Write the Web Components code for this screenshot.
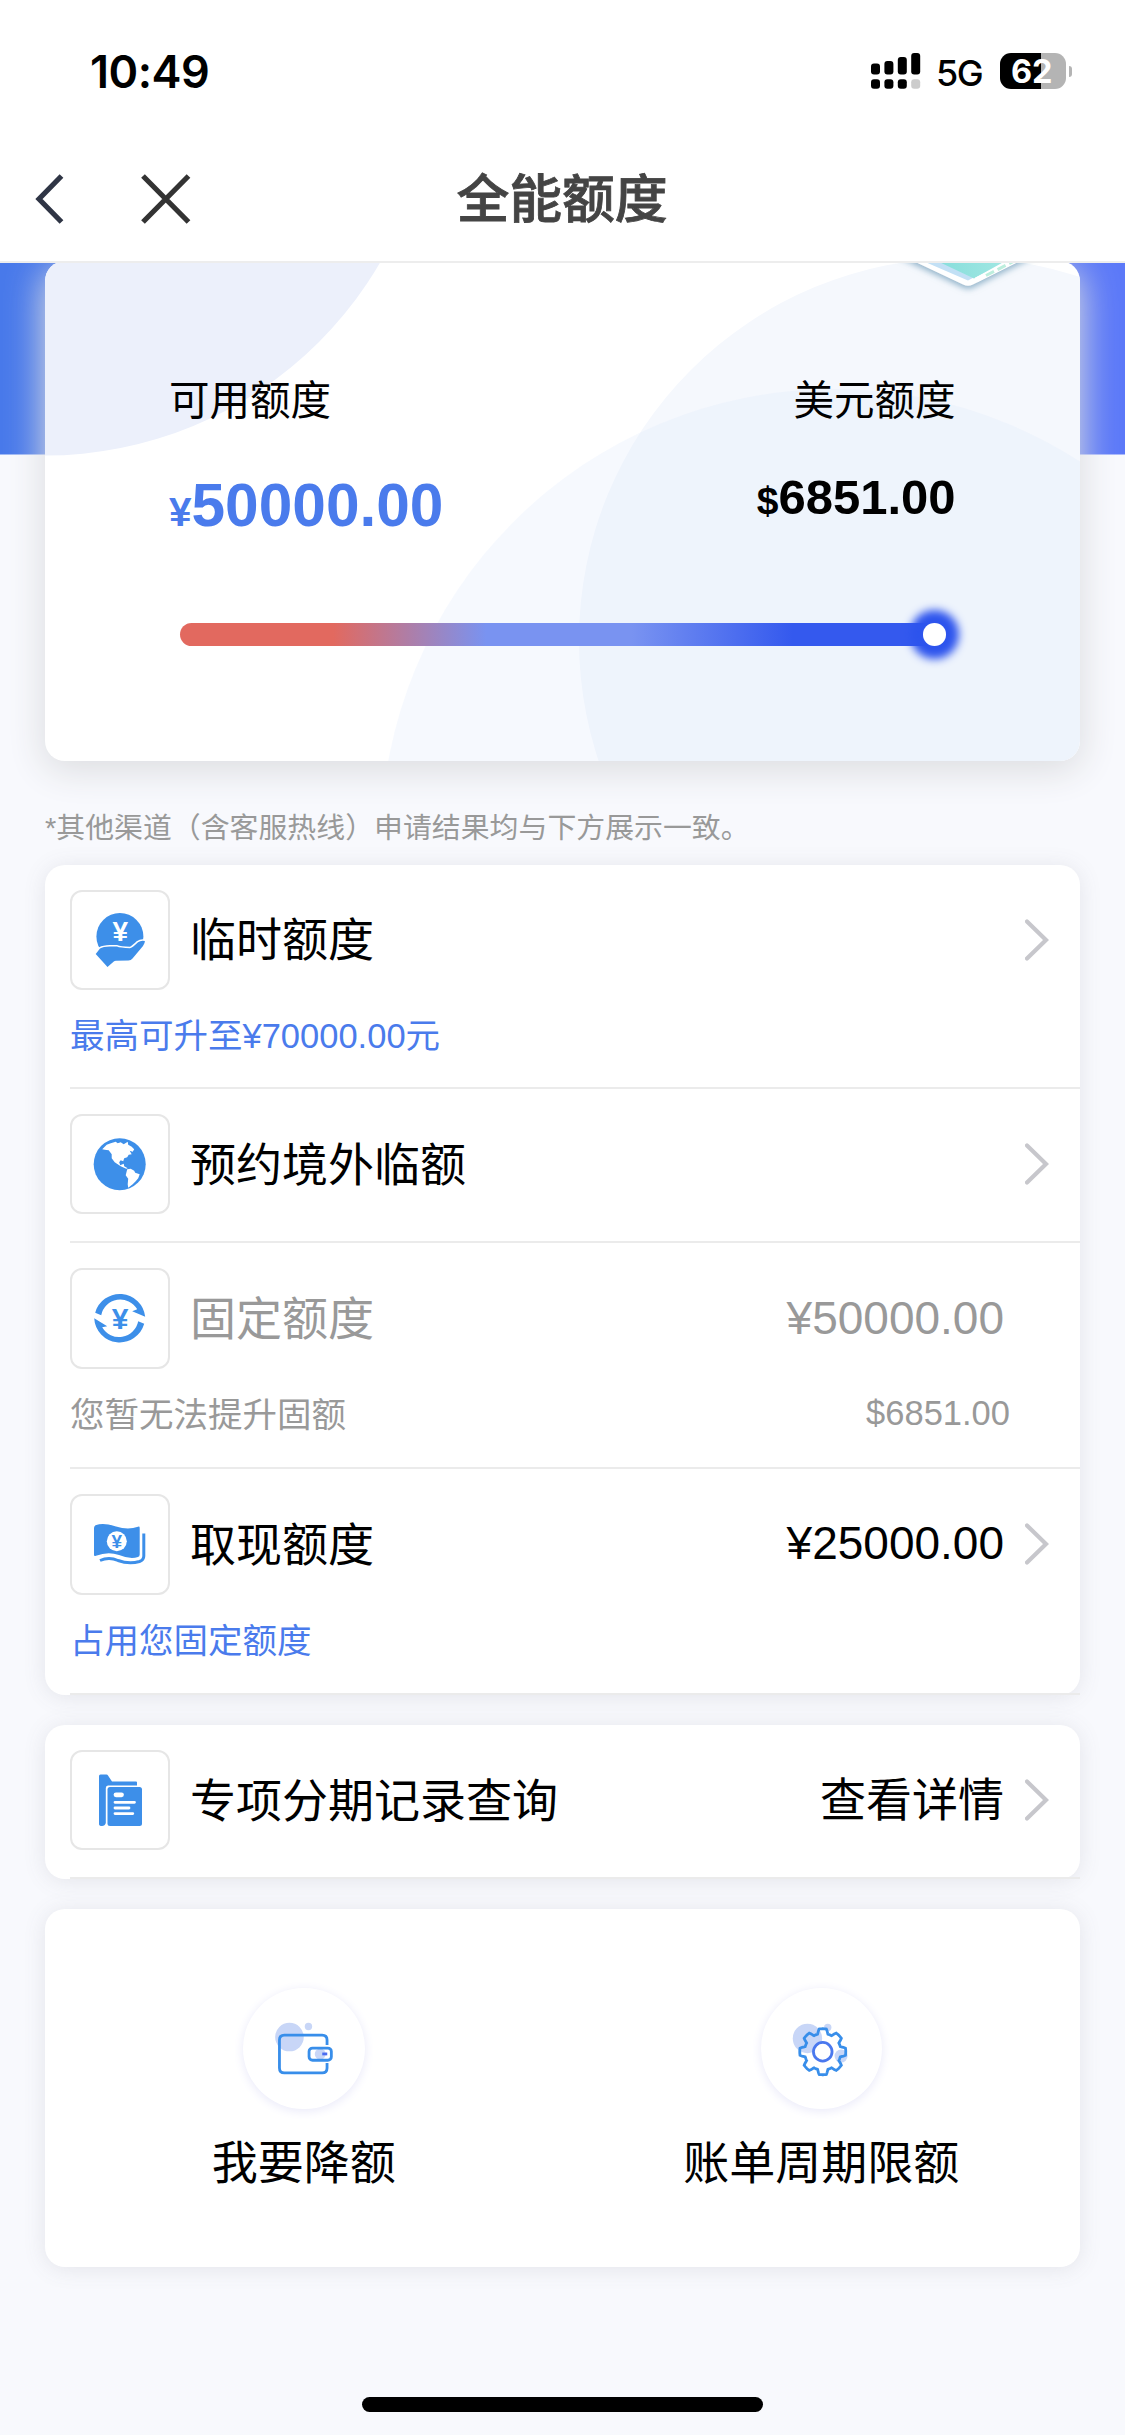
<!DOCTYPE html>
<html lang="zh-CN">
<head>
<meta charset="utf-8">
<title>全能额度</title>
<style>
html, body { margin: 0; padding: 0; }
body {
  width: 1125px; height: 2435px; overflow: hidden; background: #f8f9fd; color: #000;
  font-family: "Liberation Sans", "Noto Sans CJK SC", sans-serif;
  --blue: #4a7bec; --icon: #3d8fe9; --grey: #999;
}
</style>
</head>
<body>
<quota-page></quota-page>

<script>
const define = (name, html, setup) => customElements.define(name, class extends HTMLElement {
  constructor() {
    super();
    this.attachShadow({ mode: 'open' }).innerHTML = html;
  }
  connectedCallback() { if (setup) setup(this, this.shadowRoot); }
});

/* Status bar */
define('status-bar', `
<style>
:host { display: flex; box-sizing: border-box; height: 142px; padding: 0 53px 0 90px; justify-content: space-between; align-items: center; background: #fff; font-family: Inter, sans-serif; }
.time { font-size: 45px; font-weight: 600; line-height: 60px; letter-spacing: -0.5px; padding-top: 2px; }
.right { display: flex; align-items: center; }
.net { font-size: 36px; font-weight: 500; line-height: 40px; letter-spacing: -1.6px; margin: 4px 18px 0 15px; }
.bat { display: flex; align-items: center; gap: 3px; }
.cell { box-sizing: border-box; width: 65.5px; height: 36.5px; padding-right: 2px; border-radius: 11px; background: linear-gradient(90deg, #000 62%, #b4b4b4 62%); color: #fff; font-size: 32.500px; font-weight: 700; line-height: 37px; text-align: center; }
.nub { width: 3.5px; height: 11px; border-radius: 0 4px 4px 0; background: #b4b4b4; }
</style>
<span class="time">10:49</span>
<div class="right">
  <svg width="50" height="36" viewBox="0 0 50 36">
    <rect x="0" y="10.5" width="9" height="11" rx="3"/><rect x="13.4" y="8" width="9" height="13.5" rx="3"/>
    <rect x="26.8" y="4" width="9" height="17.500" rx="3"/><rect x="40.2" y="0" width="9" height="21.500" rx="3"/>
    <rect x="0" y="26.300" width="9" height="9.400" rx="3"/><rect x="13.4" y="26.300" width="9" height="9.400" rx="3"/>
    <rect x="26.8" y="26.300" width="9" height="9.400" rx="3"/><rect x="40.2" y="26.300" width="9" height="9.400" rx="3" fill="#ccc"/>
  </svg>
  <span class="net">5G</span>
  <div class="bat"><div class="cell">62</div><div class="nub"></div></div>
</div>`);

/* Navigation bar */
define('nav-bar', `
<style>
:host { display: grid; grid-template-columns: 1fr auto 1fr; box-sizing: border-box; height: 121px; padding: 0 36px 0 35px; align-items: center; background: #fff; border-bottom: 2px solid #ededed; position: relative; z-index: 1; }
.btns { display: flex; align-items: center; gap: 77px; }
.title { font-size: 52.800px; line-height: 60px; color: #444; padding-bottom: 13px; font-family: "Noto Sans CJK SC", sans-serif; font-weight: 500; -webkit-text-stroke: .8px #444; }
svg { display: block; fill: none; stroke-width: 5.200; margin-bottom: 5px }
</style>
<div class="btns">
  <svg width="29" height="50" viewBox="0 0 29 50" stroke="#2f3545"><path d="M26.500 2 4 25 26.500 48"/></svg>
  <svg width="50" height="50" viewBox="0 0 50 50" stroke="#333"><path d="M2 2 47.500 48M47.500 2 2 48"/></svg>
</div>
<div class="title"><slot></slot></div><span></span>`);

/* Available quota summary */
define('quota-summary', `
<style>
:host { display: flow-root; padding: 0 45px; height: 498px; background: linear-gradient(90deg, #4879ea, #5c79f8) 0 0 / 100% 191.500px no-repeat; }
.card { position: relative; box-sizing: border-box; height: 500px; margin-top: -2px; padding: 115px 124.500px 0 124px; border-radius: 20px; background: #fff; box-shadow: 0 8px 36px 2px #dcdde0; }
.bg { position: absolute; inset: 0; border-radius: 20px; }
.cols { position: relative; display: flex; justify-content: space-between; height: 157px; }
.col { display: flex; flex-direction: column; }
.col.r { align-items: flex-end; }
.label { font-size: 40.500px; line-height: 50px; }
.amt { font-weight: 700; line-height: 60px; white-space: nowrap; }
.l .amt { margin-top: 49px; font-size: 60.400px; color: var(--blue); }
.r .amt { margin-top: 41px; font-size: 49px; }
.l small { font-size: 40.500px; line-height: 1; }
.r small { font-size: 39px; line-height: 1; }
.track { position: relative; display: flex; justify-content: flex-end; height: 22.700px; margin: 90.200px 9.500px 0 11px; border-radius: 12px; background: linear-gradient(90deg, #e2695f 20%, #7993f1 40%, #7993f1 59%, #3459ee 80%); }
.knob { width: 23.300px; border-radius: 50%; background: #fff; box-shadow: 0 0 9px 13px #2d54ed; }
</style>
<div class="card">
  <svg class="bg" width="1035" height="500" viewBox="45 261 1035 500">
    <defs>
      <clipPath id="c"><rect x="45" y="261" width="1035" height="500" rx="20"/></clipPath>
      <linearGradient id="t" x1="0" x2="1"><stop offset="0" stop-color="#7fdbd9"/><stop offset="1" stop-color="#a5e9e4"/></linearGradient>
      <filter id="s" x="-20%" y="-50%" width="140%" height="220%"><feDropShadow dx="0" dy="3" stdDeviation="3" flood-color="#7fa6c0" flood-opacity=".85"/></filter>
    </defs>
    <g clip-path="url(#c)">
      <circle cx="45" cy="68" r="387.500" fill="#ecf0fb"/>
      <circle cx="961" cy="640" r="382" fill="#f5f8fd"/>
      <circle cx="834" cy="842" r="453" fill="#dfeafb" fill-opacity=".27"/>
      <path d="M890 250 963 284.500Q968 287 973 284.500L1042 250Z" fill="#fff" filter="url(#s)"/>
      <path d="M902 252 968 280.500 1010 258V252Z" fill="#c2e0f5"/>
      <path d="M918 252 974 278.500 1018 254V252Z" fill="url(#t)"/>
      <path d="M976 280 1024 256" stroke="#fff" stroke-width="5"/>
      <path d="M986 275.500 1024 256" stroke="#bdeedd" stroke-width="3" stroke-dasharray="9 4"/>
    </g>
  </svg>
  <div class="cols">
    <div class="col l"><span class="label">可用额度</span><span class="amt"><small>¥</small>50000.00</span></div>
    <div class="col r"><span class="label">美元额度</span><span class="amt"><small>$</small>6851.00</span></div>
  </div>
  <div class="track"><div class="knob"></div></div>
</div>`);

/* White rounded panel */
define('panel-card', `
<style>
:host { display: block; margin: 0 45px; border-radius: 20px; background: #fff; box-shadow: 0 2px 22px rgba(90, 95, 110, .13); }
</style><slot></slot>`);

/* Icons of 100x100 units */
const yen = (x, y, size, fill) => `<text x="${x}" y="${y}" font-family="Liberation Sans" font-weight="700" font-size="${size}" text-anchor="middle" fill="${fill}">¥</text>`;
const ICONS = {
  hand: `<circle cx="49.900" cy="46.500" r="23.500"/>
    <path d="M25.700 64 30 58.500Q33 56.800 40 56.600H47Q50 58 60 58.200Q62 58 68 52.200Q71 50 74.900 51Q75 53 73 56L62.500 68.500Q61 70.300 58.500 70.500L46 70.800Q44.500 70.800 43.500 71.800L37.500 77Z" stroke="#fff" stroke-width="3" paint-order="stroke"/>${yen(50.3, 50.5, 28, '#fff')}`,
  globe: `<g transform="translate(49.700 50.200)"><circle r="26"/>
    <path fill="#fff" d="M-17.500-15-13-19.500-9-21-4-22.500-2-21 1-22 4-20 8-22.500 8.500-19.500 12-17.500 14.500-15 13-12.500 10-13.500 12-10 9-9.500 7.500-7 4.500-6 3.500-3 1-4-.5-2 .5 1 4-.5 4.500 2 8 4 6.500 4.500 1 2-5-2-8-6-8-10-11-14-15-14.500Z"/>
    <path fill="#fff" d="M7.500 5 11 4.500 14.500 6.500 15.500 8.500 20 10 18.500 14 16 17 13 20 8.500 23.500 8 20 8.500 14.500 6 11Z"/></g>`,
  cycle: `<g transform="translate(49.700 50.300)"><path d="M-24.500-5.500A25.500 25.500 0 0 1 25.500-1.500L12.500-7 17.500-9A19.500 19.500 0 0 0-18.500-3Z"/>
    <path d="M24.500 5.500A25.500 25.500 0 0 1-25.500 0L-12.500 8-17.500 9A19.500 19.500 0 0 0 18.500 3Z"/></g>${yen(50, 61, 30, 'var(--icon)')}`,
  cash: `<path d="M24 34Q24 32.500 25.500 31.200Q34 28.500 46 32.500Q58 36.500 68 32.800Q69.700 32 69.700 34V60.500Q69.700 62.500 68 63Q60 65.500 49 61Q38 57 26 61.800Q24 62.500 24 61Z"/>
    <path d="M30 66.500Q39 62.500 48 66.500Q59 70.500 69.500 67.500Q73.800 66 73.800 62V39.500" fill="none" stroke="var(--icon)" stroke-width="3"/>
    <circle cx="46.800" cy="47.200" r="10" fill="#fff"/>${yen(46.8, 53.7, 19, 'var(--icon)')}`,
  folder: `<path d="M29 26Q29 24.500 30.500 24.500H36.500Q37.500 24.500 38 25.500L42 31.500H66Q67 31.500 67 32.500V35.500H38Q35.800 35.500 35.800 38V73Q35 76 32 76Q29 76 29 74Z"/>
    <rect x="37.500" y="37" width="34.500" height="39" rx="2.500"/>
    <g stroke="#fff" stroke-linecap="round"><path d="M46 44.800H51.500" stroke-width="4.800"/><path d="M45 52.300H64.500M45 58H59M45 63.600H62.800" stroke-width="2.800"/></g>`
};

/* Framed icon */
define('icon-tile', `
<style>
:host { display: block; box-sizing: border-box; width: 100px; height: 100.400px; border: 2px solid #e6e6e6; border-radius: 12px; flex: none; }
svg { display: block; margin: -2px; fill: var(--icon); overflow: visible; }
</style><svg width="100" height="100" viewBox="0 0 100 100"></svg>`,
(el, root) => { root.querySelector('svg').innerHTML = ICONS[el.getAttribute('icon')] || ''; });

/* List row: icon, name, value, chevron, and an optional second line */
define('quota-row', `
<style>
:host { display: block; margin-left: 25px; padding-top: 25.200px; border-bottom: 2px solid #ebebeb; }
.main { display: flex; align-items: center; height: 100.400px; padding-right: 31px; font-size: 46px; line-height: 60px; }
.name { flex: 1; margin-left: 20px; padding-top: 1px; }
.value { margin-right: 21px; margin-top: -1px; }
.value ::slotted(*) { display: block; }
svg { display: block; fill: none; stroke: #c7c7cc; stroke-width: 4.200; stroke-linecap: round; stroke-linejoin: miter; }
.note { display: flex; justify-content: space-between; box-sizing: border-box; padding: 26.500px 70px 0 0; height: 98.400px; font-size: 34.500px; line-height: 40px; color: var(--blue); }
.extra { margin-top: -2px; }
.gap { height: 26.800px; }
:host([muted]) .main, :host([muted]) .note { color: var(--grey); }
:host([muted]) svg { visibility: hidden; }
:host(:not([noted])) .note, :host([noted]) .gap { display: none; }
:host([dense]) .note { height: 96.700px; padding-top: 25.500px; }
</style>
<div class="main">
  <icon-tile></icon-tile>
  <div class="name"><slot></slot></div>
  <div class="value"><slot name="value"></slot></div>
  <svg width="24" height="42" viewBox="0 0 24 42"><path d="M2 2.500 21 21 2 39.500"/></svg>
</div>
<div class="note"><slot name="note"></slot><div class="extra"><slot name="extra"></slot></div></div>
<div class="gap"></div>`,
(el, root) => {
  const tile = root.querySelector('icon-tile');
  tile.setAttribute('icon', el.getAttribute('icon'));
  tile.shadowRoot.querySelector('svg').innerHTML = ICONS[el.getAttribute('icon')];
});

/* Gear outline with eight teeth */
const gearPath = () => {
  let d = '';
  for (let i = 0; i < 240; i++) {
    const a = i / 240 * Math.PI * 2;
    const r = 20.600 + Math.max(-2.3, Math.min(2.4, 5 * Math.cos(8 * a) + 1));
    d += (i ? 'L' : 'M') + (r * Math.sin(a)).toFixed(2) + ' ' + (-r * Math.cos(a)).toFixed(2);
  }
  return d + 'Z';
};
const ACTIONS = {
  wallet: `<g fill="#c8d6f7"><circle cx="-14.300" cy="-11.700" r="14.300"/><circle cx="4.700" cy="-22.300" r="3.700"/><circle cx="16.500" cy="5.300" r="5.500"/></g>
    <g fill="none" stroke="#388eea" stroke-width="2.800"><path d="M23.300-3.700V-8.700Q23.300-13.600 18.400-13.600H-19.400Q-24.300-13.600-24.300-8.700V19.300Q-24.300 24.200-19.400 24.200H18.400Q23.300 24.200 23.300 19.300V14.300"/>
    <rect x="5.300" y="-.7" width="22.300" height="12.200" rx="3.500"/></g><path d="M18.500 5.200H23.500" stroke="#4a6cf0" stroke-width="2.800"/>`,
  gear: `<g fill="#c8d6f7"><circle cx="-14.300" cy="-10.300" r="14.700"/><circle cx="6" cy="-21.300" r="3.700"/><circle cx="19.300" cy="7.300" r="6.500"/></g>
    <g fill="none" stroke-width="2.800" transform="translate(1 3)"><path d="${gearPath()}" stroke="#388eea"/><circle r="9.300" stroke="#4a78ee" fill="#fff"/></g>`
};
define('quota-action', `
<style>
:host { display: flex; flex: 1; flex-direction: column; align-items: center; gap: 54px; font-size: 46px; line-height: 60px; }
.disc { width: 121.500px; height: 121.500px; border-radius: 50%; background: #fff; box-shadow: 0 2px 10px 1px #ececfa; margin-bottom: -30px; }
svg { display: block; }
</style>
<div class="disc"><svg width="121.500" height="121.500" viewBox="-60.750 -60.750 121.500 121.500"></svg></div><span><slot></slot></span>`,
(el, root) => { root.querySelector('svg').innerHTML = ACTIONS[el.getAttribute('icon')]; });

define('home-indicator', `
<style>:host { display: block; width: 401px; height: 15px; margin: 130.300px auto 0; border-radius: 8px; background: #000; }</style>`);

define('quota-page', `
<style>
:host { display: flow-root; }
.tip { margin: 46.500px 45px 17px; font-size: 28.900px; line-height: 40px; color: var(--grey); position: relative; white-space: nowrap; }
.second, .third { margin-top: 29.600px; }
.actions { display: flex; box-sizing: border-box; height: 358px; padding-top: 79px; }
.up { position: relative; top: -1px; }
</style>
<status-bar></status-bar>
<nav-bar>全能额度</nav-bar>
<quota-summary></quota-summary>
<div class="tip">*其他渠道（含客服热线）申请结果均与下方展示一致。</div>
<panel-card>
  <quota-row icon="hand" noted dense>临时额度<span slot="note">最高可升至¥70000.00元</span></quota-row>
  <quota-row icon="globe">预约境外临额</quota-row>
  <quota-row icon="cycle" noted muted>固定额度<span slot="value">¥50000.00</span><span slot="note">您暂无法提升固额</span><span slot="extra">$6851.00</span></quota-row>
  <quota-row icon="cash" noted>取现额度<span slot="value" class="up">¥25000.00</span><span slot="note">占用您固定额度</span></quota-row>
</panel-card>
<panel-card class="second">
  <quota-row icon="folder">专项分期记录查询<span slot="value">查看详情</span></quota-row>
</panel-card>
<panel-card class="third">
  <div class="actions">
    <quota-action icon="wallet">我要降额</quota-action>
    <quota-action icon="gear">账单周期限额</quota-action>
  </div>
</panel-card>
<home-indicator></home-indicator>`);
</script>
</body>
</html>
